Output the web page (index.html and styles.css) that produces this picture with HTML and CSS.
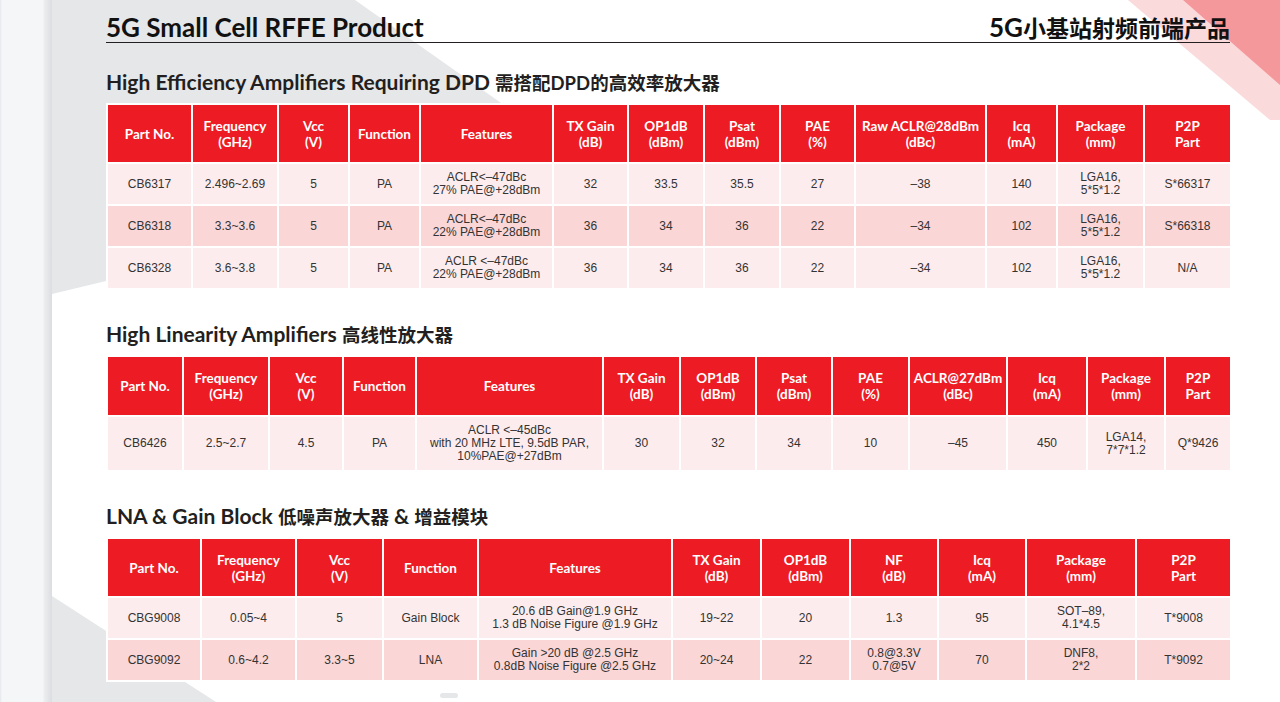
FILE: index.html
```html
<!DOCTYPE html>
<html lang="zh-CN">
<head>
<meta charset="utf-8">
<title>5G Small Cell RFFE Product</title>
<link rel="stylesheet" href="styles.css">
</head>
<body>
<div class="frame">
  <div class="rail"></div>
  <main class="page">
    <svg class="deco" width="1228" height="702" viewBox="52 0 1228 702" aria-hidden="true">
      <polygon points="52,0 355,0 589,165 52,294" fill="#e6e7e9"/>
      <polygon points="52,596 216,702 52,702" fill="#e6e7e9"/>
      <rect x="440" y="693" width="18" height="5" rx="2.5" fill="#e6e7e9"/>
      <polygon points="1128,0 1280,0 1280,120 1270,120" fill="#fbdadc"/>
      <polygon points="1183,0 1280,0 1280,85" fill="#f4989c"/>
    </svg>

    <header class="title-row">
      <h1>5G Small Cell RFFE Product</h1>
      <h1>5G<span class="cjk">小基站射频前端产品</span></h1>
    </header>

    <section class="sec sec-1">
      <h2>High Efficiency Amplifiers Requiring DPD <span class="cjk">需搭配DPD的高效率放大器</span></h2>
      <table class="t1">
        <colgroup><col><col><col><col><col><col><col><col><col><col><col><col><col></colgroup>
        <thead>
          <tr>
            <th>Part No.</th><th>Frequency<br>(GHz)</th><th>Vcc<br>(V)</th><th>Function</th><th>Features</th>
            <th>TX Gain<br>(dB)</th><th>OP1dB<br>(dBm)</th><th>Psat<br>(dBm)</th><th>PAE<br>(%)</th>
            <th>Raw ACLR@28dBm<br>(dBc)</th><th>Icq<br>(mA)</th><th>Package<br>(mm)</th><th>P2P<br>Part</th>
          </tr>
        </thead>
        <tbody>
          <tr>
            <td>CB6317</td><td>2.496~2.69</td><td>5</td><td>PA</td><td>ACLR&lt;–47dBc<br>27% PAE@+28dBm</td>
            <td>32</td><td>33.5</td><td>35.5</td><td>27</td><td>–38</td><td>140</td><td>LGA16,<br>5*5*1.2</td><td>S*66317</td>
          </tr>
          <tr>
            <td>CB6318</td><td>3.3~3.6</td><td>5</td><td>PA</td><td>ACLR&lt;–47dBc<br>22% PAE@+28dBm</td>
            <td>36</td><td>34</td><td>36</td><td>22</td><td>–34</td><td>102</td><td>LGA16,<br>5*5*1.2</td><td>S*66318</td>
          </tr>
          <tr>
            <td>CB6328</td><td>3.6~3.8</td><td>5</td><td>PA</td><td>ACLR &lt;–47dBc<br>22% PAE@+28dBm</td>
            <td>36</td><td>34</td><td>36</td><td>22</td><td>–34</td><td>102</td><td>LGA16,<br>5*5*1.2</td><td>N/A</td>
          </tr>
        </tbody>
      </table>
    </section>

    <section class="sec sec-2">
      <h2>High Linearity Amplifiers <span class="cjk">高线性放大器</span></h2>
      <table class="t2">
        <colgroup><col><col><col><col><col><col><col><col><col><col><col><col><col></colgroup>
        <thead>
          <tr>
            <th>Part No.</th><th>Frequency<br>(GHz)</th><th>Vcc<br>(V)</th><th>Function</th><th>Features</th>
            <th>TX Gain<br>(dB)</th><th>OP1dB<br>(dBm)</th><th>Psat<br>(dBm)</th><th>PAE<br>(%)</th>
            <th>ACLR@27dBm<br>(dBc)</th><th>Icq<br>(mA)</th><th>Package<br>(mm)</th><th>P2P<br>Part</th>
          </tr>
        </thead>
        <tbody>
          <tr>
            <td>CB6426</td><td>2.5~2.7</td><td>4.5</td><td>PA</td>
            <td>ACLR &lt;–45dBc<br>with 20 MHz LTE, 9.5dB PAR,<br>10%PAE@+27dBm</td>
            <td>30</td><td>32</td><td>34</td><td>10</td><td>–45</td><td>450</td><td>LGA14,<br>7*7*1.2</td><td>Q*9426</td>
          </tr>
        </tbody>
      </table>
    </section>

    <section class="sec sec-3">
      <h2>LNA &amp; Gain Block <span class="cjk">低噪声放大器</span> &amp; <span class="cjk">增益模块</span></h2>
      <table class="t3">
        <colgroup><col><col><col><col><col><col><col><col><col><col><col></colgroup>
        <thead>
          <tr>
            <th>Part No.</th><th>Frequency<br>(GHz)</th><th>Vcc<br>(V)</th><th>Function</th><th>Features</th>
            <th>TX Gain<br>(dB)</th><th>OP1dB<br>(dBm)</th><th>NF<br>(dB)</th><th>Icq<br>(mA)</th>
            <th>Package<br>(mm)</th><th>P2P<br>Part</th>
          </tr>
        </thead>
        <tbody>
          <tr>
            <td>CBG9008</td><td>0.05~4</td><td>5</td><td>Gain Block</td>
            <td>20.6 dB Gain@1.9 GHz<br>1.3 dB Noise Figure @1.9 GHz</td>
            <td>19~22</td><td>20</td><td>1.3</td><td>95</td><td>SOT–89,<br>4.1*4.5</td><td>T*9008</td>
          </tr>
          <tr>
            <td>CBG9092</td><td>0.6~4.2</td><td>3.3~5</td><td>LNA</td>
            <td>Gain &gt;20 dB @2.5 GHz<br>0.8dB Noise Figure @2.5 GHz</td>
            <td>20~24</td><td>22</td><td>0.8@3.3V<br>0.7@5V</td><td>70</td><td>DNF8,<br>2*2</td><td>T*9092</td>
          </tr>
        </tbody>
      </table>
    </section>
  </main>
</div>
</body>
</html>
```

FILE: styles.css
```css
* { box-sizing: border-box; }

html, body {
  margin: 0;
  height: 100%;
}

body {
  background: #ffffff;
  font-family: "Liberation Sans", Arial, sans-serif;
  overflow: hidden;
}

.frame {
  display: flex;
  height: 702px;
}

.rail {
  width: 52px;
  flex: none;
  background: linear-gradient(to right, #e6e7ea 0, #f5f6f8 2px, #f5f6f8 43px, #eceef0 44px, #dcdde0 52px);
}

.page {
  flex: 1;
  position: relative;
  padding: 12px 50px 0 54px;
  overflow: hidden;
}

.deco {
  position: absolute;
  left: 0;
  top: 0;
  z-index: 0;
}

.title-row,
.sec {
  position: relative;
  z-index: 1;
}

.title-row {
  display: flex;
  justify-content: space-between;
  align-items: baseline;
  height: 31px;
  border-bottom: 1.5px solid #231f20;
}

h1 {
  margin: 0;
  font: 700 26px/30px Lato, "Noto Sans CJK SC", sans-serif;
  color: #111111;
}

h1 .cjk { font-size: 23px; }

h2 {
  margin: 0 0 8px;
  font: 700 21px/24px Lato, "Noto Sans CJK SC", sans-serif;
  color: #231f20;
}

h2 .cjk { font-size: 18.5px; }

.sec-1 h2 { margin-top: 27px; }
.sec-2 h2 { margin-top: 32px; }
.sec-3 h2 { margin-top: 32px; }

table {
  width: 1124px;
  border-collapse: collapse;
  table-layout: fixed;
}

th, td {
  border: 2px solid #ffffff;
  text-align: center;
  vertical-align: middle;
  padding: 0 2px;
}

th {
  background: #ed1c24;
  color: #ffffff;
  font: 700 13.5px/16px Lato, "Noto Sans CJK SC", sans-serif;
}

td {
  font-size: 12px;
  line-height: 13px;
  color: #333333;
}

thead tr { height: 59px; }
tbody tr { height: 42px; }
.t2 thead tr { height: 60px; }
.t2 tbody tr { height: 55px; }

tbody tr:nth-child(odd) td { background: #fdeced; }
tbody tr:nth-child(even) td { background: #fad6d7; }

/* table 1 column widths */
.t1 col:nth-child(1) { width: 85px; }
.t1 col:nth-child(2) { width: 86px; }
.t1 col:nth-child(3) { width: 71px; }
.t1 col:nth-child(4) { width: 71px; }
.t1 col:nth-child(5) { width: 133px; }
.t1 col:nth-child(6) { width: 75px; }
.t1 col:nth-child(7) { width: 76px; }
.t1 col:nth-child(8) { width: 76px; }
.t1 col:nth-child(9) { width: 75px; }
.t1 col:nth-child(10) { width: 131px; }
.t1 col:nth-child(11) { width: 71px; }
.t1 col:nth-child(12) { width: 87px; }
.t1 col:nth-child(13) { width: 87px; }

/* table 2 column widths */
.t2 col:nth-child(1) { width: 76px; }
.t2 col:nth-child(2) { width: 86px; }
.t2 col:nth-child(3) { width: 74px; }
.t2 col:nth-child(4) { width: 73px; }
.t2 col:nth-child(5) { width: 187px; }
.t2 col:nth-child(6) { width: 77px; }
.t2 col:nth-child(7) { width: 76px; }
.t2 col:nth-child(8) { width: 76px; }
.t2 col:nth-child(9) { width: 77px; }
.t2 col:nth-child(10) { width: 98px; }
.t2 col:nth-child(11) { width: 80px; }
.t2 col:nth-child(12) { width: 78px; }
.t2 col:nth-child(13) { width: 66px; }

/* table 3 column widths */
.t3 col:nth-child(1) { width: 94px; }
.t3 col:nth-child(2) { width: 95px; }
.t3 col:nth-child(3) { width: 87px; }
.t3 col:nth-child(4) { width: 95px; }
.t3 col:nth-child(5) { width: 194px; }
.t3 col:nth-child(6) { width: 89px; }
.t3 col:nth-child(7) { width: 89px; }
.t3 col:nth-child(8) { width: 88px; }
.t3 col:nth-child(9) { width: 88px; }
.t3 col:nth-child(10) { width: 110px; }
.t3 col:nth-child(11) { width: 95px; }
```
